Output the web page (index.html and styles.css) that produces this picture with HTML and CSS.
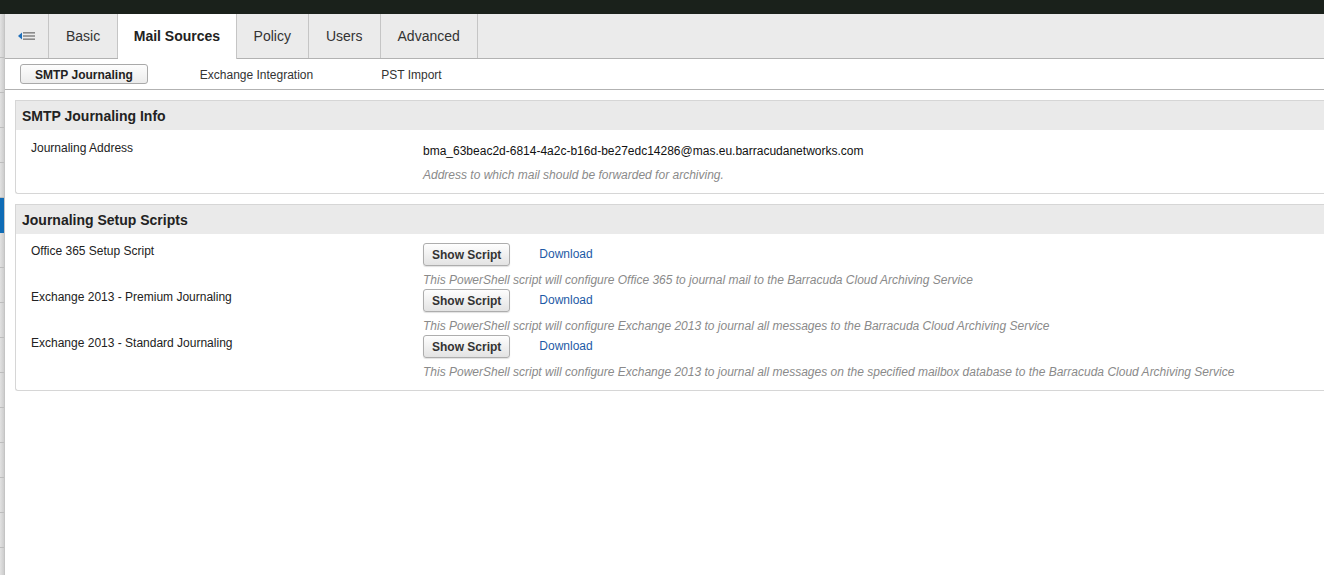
FILE: index.html
```html
<!DOCTYPE html>
<html lang="en">
<head>
    <meta charset="UTF-8">
    <meta name="viewport" content="width=device-width, initial-scale=1.0">
    <title>Mail Sources</title>
    <link rel="stylesheet" href="styles.css">
</head>
<body>
    <div class="topbar"></div>
    <div class="layout">
        <div class="sidebar">
            <div class="side-head"></div>
            <div class="side-item"></div>
            <div class="side-item"></div>
            <div class="side-item"></div>
            <div class="side-item"></div>
            <div class="side-item active"></div>
            <div class="side-item"></div>
            <div class="side-item"></div>
            <div class="side-item"></div>
            <div class="side-item"></div>
            <div class="side-item"></div>
            <div class="side-item"></div>
            <div class="side-item"></div>
            <div class="side-item"></div>
            <div class="side-item"></div>
        </div>
        <div class="main">
            <div class="tabs">
                <div class="tab tab-toggle">
                    <svg width="17" height="10" viewBox="0 0 17 10">
                        <polygon points="0,5 4,1.5 4,8.5" fill="#1f6fba"/>
                        <rect x="5" y="1" width="12" height="1.6" fill="#8a8a8a"/>
                        <rect x="5" y="4.2" width="12" height="1.6" fill="#8a8a8a"/>
                        <rect x="5" y="7.4" width="12" height="1.6" fill="#8a8a8a"/>
                    </svg>
                </div>
                <div class="tab">Basic</div>
                <div class="tab active">Mail Sources</div>
                <div class="tab">Policy</div>
                <div class="tab">Users</div>
                <div class="tab">Advanced</div>
            </div>
            <div class="subtabs">
                <div class="subtab active">SMTP Journaling</div>
                <div class="subtab">Exchange Integration</div>
                <div class="subtab">PST Import</div>
            </div>

            <div class="content">
                <div class="panel">
                    <div class="panel-head">SMTP Journaling Info</div>
                    <div class="panel-body info">
                        <div class="row">
                            <div class="label">Journaling Address</div>
                            <div class="value">
                                <div class="address">bma_63beac2d-6814-4a2c-b16d-be27edc14286@mas.eu.barracudanetworks.com</div>
                                <div class="help">Address to which mail should be forwarded for archiving.</div>
                            </div>
                        </div>
                    </div>
                </div>

                <div class="panel">
                    <div class="panel-head">Journaling Setup Scripts</div>
                    <div class="panel-body scripts">
                        <div class="row">
                            <div class="label">Office 365 Setup Script</div>
                            <div class="value">
                                <div class="actions">
                                    <button class="btn">Show Script</button>
                                    <a href="#" class="link">Download</a>
                                </div>
                                <div class="help">This PowerShell script will configure Office 365 to journal mail to the Barracuda Cloud Archiving Service</div>
                            </div>
                        </div>
                        <div class="row">
                            <div class="label">Exchange 2013 - Premium Journaling</div>
                            <div class="value">
                                <div class="actions">
                                    <button class="btn">Show Script</button>
                                    <a href="#" class="link">Download</a>
                                </div>
                                <div class="help">This PowerShell script will configure Exchange 2013 to journal all messages to the Barracuda Cloud Archiving Service</div>
                            </div>
                        </div>
                        <div class="row">
                            <div class="label">Exchange 2013 - Standard Journaling</div>
                            <div class="value">
                                <div class="actions">
                                    <button class="btn">Show Script</button>
                                    <a href="#" class="link">Download</a>
                                </div>
                                <div class="help">This PowerShell script will configure Exchange 2013 to journal all messages on the specified mailbox database to the Barracuda Cloud Archiving Service</div>
                            </div>
                        </div>
                    </div>
                </div>
            </div>
        </div>
    </div>
</body>
</html>
```

FILE: styles.css
```css
html, body {
    margin: 0;
    padding: 0;
    height: 100%;
    font-family: "Liberation Sans", Arial, sans-serif;
    color: #222;
    background: #fff;
    overflow: hidden;
}

.topbar {
    height: 14px;
    background: #1a211b;
}

.layout {
    display: flex;
    height: calc(100% - 14px);
}

/* collapsed left navigation, only its edge shows */
.sidebar {
    width: 4px;
    flex-shrink: 0;
    background: linear-gradient(to right, #e2e2e2, #cdcdcd);
    border-right: 1px solid #c4c4c4;
}

.side-head {
    height: 43px;
    border-bottom: 1px solid #bdbdbd;
}

.side-item {
    height: 34px;
    border-bottom: 1px solid #bdbdbd;
}

.side-item.active {
    background: #0f6cb6;
    border-bottom-color: #0f6cb6;
}

.main {
    flex: 1;
    min-width: 0;
}

.tabs {
    display: flex;
    height: 44px;
    background: #ebebeb;
    border-bottom: 1px solid #b2b2b2;
}

.tab {
    padding: 0 17px;
    line-height: 44px;
    font-size: 14px;
    color: #333;
    border-right: 1px solid #c5c5c5;
}

.tab-toggle {
    width: 44px;
    padding: 0;
    display: flex;
    align-items: center;
    justify-content: center;
    box-sizing: border-box;
}

.tab.active {
    background: #fff;
    font-weight: bold;
    color: #222;
    height: 45px;
    padding: 0 15.5px;
}

.subtabs {
    display: flex;
    align-items: center;
    height: 30px;
    padding-left: 15px;
    border-bottom: 1px solid #b2b2b2;
}

.subtab {
    height: 18px;
    line-height: 20px;
    padding: 0 15px;
    margin-right: 36px;
    font-size: 12px;
    color: #333;
    border: 1px solid transparent;
}

.subtab.active {
    font-weight: bold;
    color: #222;
    padding: 0 14px;
    border-color: #a9a9a9;
    border-radius: 3px;
    background: linear-gradient(#fdfdfd, #ececec);
}

.content {
    padding: 10px 0 0 10px;
}

.panel {
    border: 1px solid #d6d6d6;
    border-right: none;
    border-radius: 0 0 0 3px;
    margin-bottom: 10px;
}

.panel-head {
    height: 29px;
    line-height: 31px;
    padding-left: 6px;
    background: #eaeaea;
    font-size: 14px;
    font-weight: bold;
    color: #222;
}

.panel-body {
    padding: 10px 0 10px 0;
}

.panel-body.info {
    padding-bottom: 10px;
}

.panel-body.scripts {
    padding-top: 9px;
}

.row {
    display: flex;
    margin-bottom: 1px;
}

.row:last-child {
    margin-bottom: 0;
}

.label {
    width: 392px;
    flex-shrink: 0;
    padding-left: 15px;
    padding-top: 1px;
    font-size: 12px;
    line-height: 14px;
    color: #222;
}

.value {
    font-size: 12px;
}

.address {
    padding-top: 4px;
    line-height: 14px;
    color: #111;
}

.help {
    margin-top: 6px;
    line-height: 16px;
    font-style: italic;
    color: #8a8a8a;
    white-space: nowrap;
}

.info .help {
    margin-top: 9px;
}

.actions {
    display: flex;
    align-items: center;
}

.btn {
    height: 23px;
    padding: 0 8px;
    font-family: "Liberation Sans", Arial, sans-serif;
    font-size: 12px;
    font-weight: bold;
    color: #333;
    border: 1px solid #adadad;
    border-radius: 3px;
    background: linear-gradient(#fefefe, #e3e3e3);
    box-shadow: 0 1px 1px rgba(0, 0, 0, 0.12);
    cursor: pointer;
}

.link {
    margin-left: 29px;
    font-size: 12px;
    color: #1d5aa6;
    text-decoration: none;
    margin-top: -2px;
}
```
